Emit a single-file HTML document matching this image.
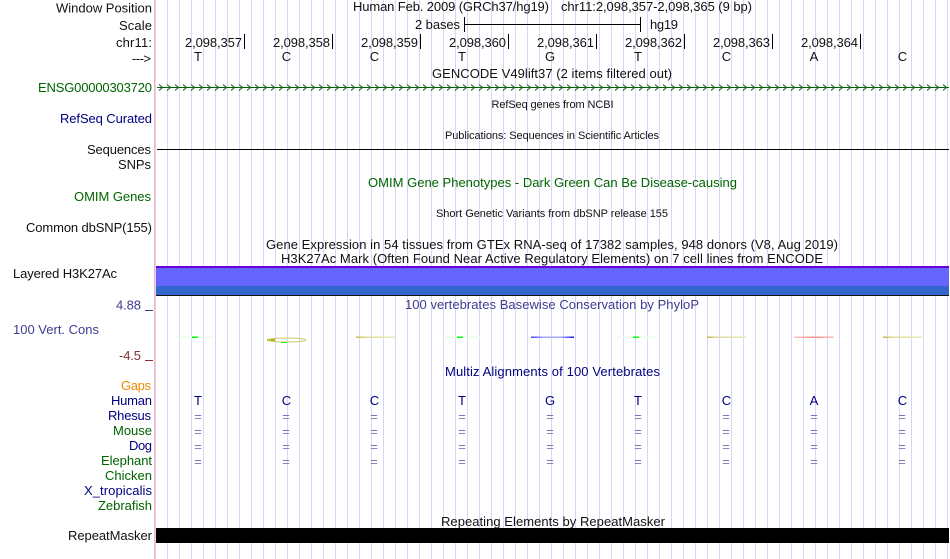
<!DOCTYPE html>
<html><head><meta charset="utf-8">
<style>
html,body{margin:0;padding:0;background:#fff;width:950px;height:559px;overflow:hidden}
svg{display:block}
text{font-family:"Liberation Sans",sans-serif;font-size:13px;fill:#111}
.m{text-anchor:middle}
.s{font-size:11px}
.navy{fill:#000080}
.grn{fill:#006400}
.eq{text-anchor:middle;fill:#7878b8}
.v{fill:#3d3d8f}
</style></head><body>
<svg width="950" height="559" viewBox="0 0 950 559" xmlns="http://www.w3.org/2000/svg">
<defs>
<pattern id="g" x="167" y="0" width="12" height="559" patternUnits="userSpaceOnUse"><rect x="0" y="0" width="1" height="559" fill="#d8d6f8"/></pattern>
<pattern id="c" x="158" y="84" width="8" height="7" patternUnits="userSpaceOnUse"><path d="M1 0.5 L4.5 3.5 L1 6.5" fill="none" stroke="#0a5f0a" stroke-width="1"/></pattern>
<linearGradient id="bl"><stop offset="0" stop-color="#4040ff"/><stop offset=".3" stop-color="#a8a8ff"/><stop offset=".7" stop-color="#a8a8ff"/><stop offset="1" stop-color="#1010f0"/></linearGradient>
<linearGradient id="ye"><stop offset="0" stop-color="#c0b840"/><stop offset=".25" stop-color="#dcdc98"/><stop offset="1" stop-color="#e8e8b8"/></linearGradient>
<linearGradient id="re"><stop offset="0" stop-color="#ffc0c0"/><stop offset=".5" stop-color="#ff9090"/><stop offset="1" stop-color="#ffc0c0"/></linearGradient>
</defs>
<rect x="155" y="0" width="795" height="559" fill="url(#g)"/>
<rect x="154" y="0" width="1" height="559" fill="#ffb0b4"/>

<!-- labels -->
<text x="56" y="12.5" textLength="96">Window Position</text>
<text x="119" y="30" textLength="33">Scale</text>
<text x="116" y="47" textLength="36">chr11:</text>
<text x="132" y="63" textLength="19">---&gt;</text>
<text class="grn" x="38" y="92" textLength="114">ENSG00000303720</text>
<text class="navy" x="60" y="123" textLength="92">RefSeq Curated</text>
<text x="87" y="154" textLength="64">Sequences</text>
<text x="118" y="169" textLength="33">SNPs</text>
<text class="grn" x="74" y="201" textLength="77">OMIM Genes</text>
<text x="26" y="232" textLength="126">Common dbSNP(155)</text>
<text x="13" y="278" textLength="104">Layered H3K27Ac</text>
<text class="v" x="116" y="309.5" textLength="25">4.88</text>
<rect x="145" y="310" width="8" height="1" fill="#3d3d8f"/>
<text class="v" x="13" y="334" textLength="86">100 Vert. Cons</text>
<text x="119" y="360" textLength="22" style="fill:#853030">-4.5</text>
<rect x="145" y="360" width="8" height="1" fill="#853030"/>
<text x="121" y="390" textLength="30" style="fill:#f08c00">Gaps</text>
<text class="navy" x="111" y="405" textLength="41">Human</text>
<text class="navy" x="108" y="420" textLength="43">Rhesus</text>
<text class="grn" x="113" y="435" textLength="39">Mouse</text>
<text class="navy" x="129" y="450" textLength="23">Dog</text>
<text class="grn" x="101" y="465" textLength="51">Elephant</text>
<text class="grn" x="105" y="480" textLength="47">Chicken</text>
<text class="navy" x="84" y="495" textLength="68">X_tropicalis</text>
<text class="grn" x="98" y="510" textLength="54">Zebrafish</text>
<text x="68" y="540" textLength="84">RepeatMasker</text>

<!-- header -->
<text x="353" y="11" textLength="196">Human Feb. 2009 (GRCh37/hg19)</text>
<text x="561" y="11" textLength="191">chr11:2,098,357-2,098,365 (9 bp)</text>
<text x="415" y="29" textLength="45">2 bases</text>
<path d="M464.5 17V32M640.5 17V32M464.5 24.5H640.5" stroke="#000" stroke-width="1" fill="none"/>
<text x="650" y="29" textLength="28">hg19</text>

<!-- ruler -->
<text x="185" y="47" textLength="57">2,098,357</text>
<text x="273" y="47" textLength="57">2,098,358</text>
<text x="361" y="47" textLength="57">2,098,359</text>
<text x="449" y="47" textLength="57">2,098,360</text>
<text x="537" y="47" textLength="57">2,098,361</text>
<text x="625" y="47" textLength="57">2,098,362</text>
<text x="713" y="47" textLength="57">2,098,363</text>
<text x="801" y="47" textLength="57">2,098,364</text>
<path d="M244.5 34V49M332.5 34V49M420.5 34V49M508.5 34V49M596.5 34V49M684.5 34V49M772.5 34V49M860.5 34V49" stroke="#000" fill="none"/>
<text class="m" x="198" y="61">T</text><text class="m" x="286.5" y="61">C</text><text class="m" x="374.5" y="61">C</text><text class="m" x="462" y="61">T</text><text class="m" x="550" y="61">G</text><text class="m" x="638" y="61">T</text><text class="m" x="726.5" y="61">C</text><text class="m" x="814" y="61">A</text><text class="m" x="902.5" y="61">C</text>

<text x="432" y="78" textLength="240">GENCODE V49lift37 (2 items filtered out)</text>
<rect x="157" y="87" width="792" height="1" fill="#0a5f0a"/>
<rect x="158" y="84" width="791" height="7" fill="url(#c)"/>
<text class="s" x="491.5" y="108" textLength="122">RefSeq genes from NCBI</text>
<text class="s" x="445" y="139" textLength="214">Publications: Sequences in Scientific Articles</text>
<rect x="157" y="149" width="792" height="1" fill="#000"/>
<text class="grn" x="368" y="187" textLength="369">OMIM Gene Phenotypes - Dark Green Can Be Disease-causing</text>
<text class="s" x="436" y="217" textLength="232">Short Genetic Variants from dbSNP release 155</text>
<text x="266" y="249" textLength="572">Gene Expression in 54 tissues from GTEx RNA-seq of 17382 samples, 948 donors (V8, Aug 2019)</text>
<text x="281" y="263" textLength="542">H3K27Ac Mark (Often Found Near Active Regulatory Elements) on 7 cell lines from ENCODE</text>

<!-- H3K27Ac -->
<rect x="156" y="266" width="793" height="2" fill="#6600dd"/>
<rect x="156" y="268" width="793" height="18" fill="#6666ff"/>
<rect x="156" y="286" width="793" height="9" fill="#3366cc"/>
<rect x="156" y="295" width="793" height="1" fill="#111"/>

<text class="v" x="405" y="309" textLength="294">100 vertebrates Basewise Conservation by PhyloP</text>

<!-- conservation -->
<rect x="176" y="336.5" width="38" height="1.5" fill="#e8fce8"/><rect x="192" y="336.5" width="6" height="1.5" fill="#00ff00"/>
<rect x="267" y="339" width="8" height="2" fill="#b0b000"/>
<ellipse cx="287" cy="340" rx="19" ry="2" fill="none" stroke="#cccc70" stroke-width="1"/>
<rect x="281" y="342" width="6" height="1" fill="#00ff00"/>
<rect x="356" y="336.5" width="39" height="1.5" fill="url(#ye)"/>
<rect x="442" y="336.5" width="38" height="1.5" fill="#e8fce8"/><rect x="457" y="336.5" width="6" height="1.5" fill="#00ff00"/>
<rect x="531" y="336.5" width="43" height="1.5" fill="url(#bl)"/>
<rect x="617" y="336.5" width="38" height="1.5" fill="#e8fce8"/><rect x="633" y="336.5" width="6" height="1.5" fill="#00ff00"/>
<rect x="707" y="336.5" width="39" height="1.5" fill="url(#ye)"/>
<rect x="794" y="336.5" width="40" height="1.5" fill="url(#re)"/>
<rect x="883" y="336.5" width="39" height="1.5" fill="url(#ye)"/>

<text class="navy" x="445" y="376" textLength="215">Multiz Alignments of 100 Vertebrates</text>

<!-- multiz -->
<text class="m navy" x="198" y="405">T</text><text class="m navy" x="286.5" y="405">C</text><text class="m navy" x="374.5" y="405">C</text><text class="m navy" x="462" y="405">T</text><text class="m navy" x="550" y="405">G</text><text class="m navy" x="638" y="405">T</text><text class="m navy" x="726.5" y="405">C</text><text class="m navy" x="814" y="405">A</text><text class="m navy" x="902.5" y="405">C</text>

<text class="eq" x="198" y="421">=</text><text class="eq" x="286" y="421">=</text><text class="eq" x="374" y="421">=</text><text class="eq" x="462" y="421">=</text><text class="eq" x="550" y="421">=</text><text class="eq" x="638" y="421">=</text><text class="eq" x="726" y="421">=</text><text class="eq" x="814" y="421">=</text><text class="eq" x="902" y="421">=</text>
<text class="eq" x="198" y="436">=</text><text class="eq" x="286" y="436">=</text><text class="eq" x="374" y="436">=</text><text class="eq" x="462" y="436">=</text><text class="eq" x="550" y="436">=</text><text class="eq" x="638" y="436">=</text><text class="eq" x="726" y="436">=</text><text class="eq" x="814" y="436">=</text><text class="eq" x="902" y="436">=</text>
<text class="eq" x="198" y="451">=</text><text class="eq" x="286" y="451">=</text><text class="eq" x="374" y="451">=</text><text class="eq" x="462" y="451">=</text><text class="eq" x="550" y="451">=</text><text class="eq" x="638" y="451">=</text><text class="eq" x="726" y="451">=</text><text class="eq" x="814" y="451">=</text><text class="eq" x="902" y="451">=</text>
<text class="eq" x="198" y="466">=</text><text class="eq" x="286" y="466">=</text><text class="eq" x="374" y="466">=</text><text class="eq" x="462" y="466">=</text><text class="eq" x="550" y="466">=</text><text class="eq" x="638" y="466">=</text><text class="eq" x="726" y="466">=</text><text class="eq" x="814" y="466">=</text><text class="eq" x="902" y="466">=</text>

<text x="441" y="526" textLength="224">Repeating Elements by RepeatMasker</text>
<rect x="156" y="528" width="793" height="15" fill="#000"/>
</svg>
</body></html>
